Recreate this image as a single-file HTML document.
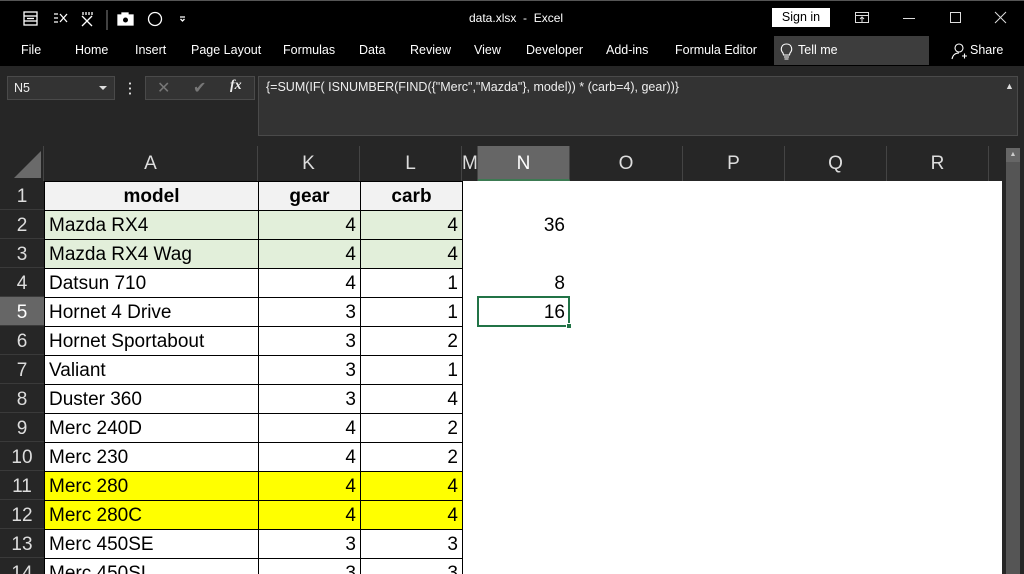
<!DOCTYPE html>
<html style="overflow:hidden;height:574px"><head><meta charset="utf-8"><style>
*{margin:0;padding:0;box-sizing:border-box}
html,body{width:1024px;height:574px;overflow:hidden}
body{background:#262626;font-family:"Segoe UI","Liberation Sans","DejaVu Sans",sans-serif;position:relative;color:#fff}
.abs{position:absolute}
.title{left:0;top:0;width:1024px;height:36px;background:#000;border-top:1px solid #555}
.tabs{left:0;top:36px;width:1024px;height:30px;background:#000}
.t{position:absolute;top:43px;font-size:12.5px;color:#fff}
.hdr{top:146px;height:35px;font-size:19px;color:#ddd;text-align:center;line-height:36px;border-right:1px solid #444}
.rh{position:absolute;left:0;width:44px;height:29px;background:#262626;color:#ddd;font-size:19px;text-align:center;line-height:31px;border-bottom:1px solid #3a3a3a}
.c{position:absolute;height:30px;border:1px solid #000;background:#fff;color:#000;font-size:19px;line-height:30px;padding:0 4px;white-space:nowrap;overflow:hidden}
.r{text-align:right}
</style></head><body>
<div class="abs title"></div>
<div class="abs tabs"></div>
<svg class="abs" style="left:20px;top:8px" width="180" height="22" viewBox="0 0 180 22" fill="none" stroke="#fff" stroke-width="1.3">
<rect x="4" y="4" width="13" height="13"/><line x1="4" y1="8" x2="17" y2="8"/><line x1="4" y1="13" x2="17" y2="13"/><line x1="7" y1="10.5" x2="14" y2="10.5"/>
<path d="M34 6h4M34 10h4M34 14h4M40 6l7 8M47 6l-7 8"/>
<path d="M63 4v3M66 4v3M69 4v3M72 4v3M62 8l10 10M72 8l-10 10"/>
<line x1="87" y1="2" x2="87" y2="22" stroke="#666"/>
<rect x="98" y="7" width="15" height="10" fill="#fff"/><rect x="102" y="5" width="6" height="3" fill="#fff"/><circle cx="105.5" cy="12" r="2.5" fill="#000" stroke="none"/>
<circle cx="135" cy="11" r="6.5"/>
<path d="M160 9h5M160.5 11l2 2 2-2" />
</svg>
<div class="abs" style="left:469px;top:11px;font-size:12px">data.xlsx &nbsp;-&nbsp; Excel</div>
<div class="abs" style="left:772px;top:8px;width:58px;height:19px;background:#fff;color:#000;font-size:12.5px;text-align:center;line-height:19px">Sign in</div>
<svg class="abs" style="left:850px;top:8px" width="170" height="20" fill="none" stroke="#ddd" stroke-width="1">
<rect x="5.5" y="4.5" width="13" height="10"/><line x1="5" y1="7.5" x2="19" y2="7.5"/><path d="M12 14V9M10 11l2-2 2 2"/>
<line x1="53" y1="10.5" x2="65" y2="10.5"/>
<rect x="100.5" y="4.5" width="10" height="10"/>
<path d="M145 4l11 11M156 4l-11 11"/>
</svg>
<div class="t" style="left:21px">File</div>
<div class="t" style="left:75px">Home</div>
<div class="t" style="left:135px">Insert</div>
<div class="t" style="left:191px">Page Layout</div>
<div class="t" style="left:283px">Formulas</div>
<div class="t" style="left:359px">Data</div>
<div class="t" style="left:410px">Review</div>
<div class="t" style="left:474px">View</div>
<div class="t" style="left:526px">Developer</div>
<div class="t" style="left:606px">Add-ins</div>
<div class="t" style="left:675px">Formula Editor</div>
<div class="abs" style="left:774px;top:36px;width:155px;height:29px;background:#3d3d3d"></div>
<svg class="abs" style="left:779px;top:41px" width="16" height="20" fill="none" stroke="#fff" stroke-width="1.1"><path d="M4 12C1 9 2 3 7.5 3S14 9 11 12L10.5 14H4.5Z"/><path d="M5 16h5M5.5 18h4"/></svg>
<div class="t" style="left:798px">Tell me</div>
<svg class="abs" style="left:950px;top:41px" width="18" height="20" fill="none" stroke="#fff" stroke-width="1.1"><circle cx="9" cy="7" r="4"/><path d="M2 18c1-5 4-6 7-6M12 15h5M14.5 12.5v5"/></svg>
<div class="t" style="left:970px">Share</div>
<div class="abs" style="left:7px;top:76px;width:108px;height:24px;background:#333;border:1px solid #4a4a4a;font-size:12.5px;line-height:22px;padding-left:6px;color:#eee">N5</div>
<div class="abs" style="left:99px;top:86px;border-left:4px solid transparent;border-right:4px solid transparent;border-top:4px solid #ddd"></div>
<div class="abs" style="left:129px;top:81px;width:2px;height:14px;background:radial-gradient(circle,#ddd 1px,transparent 1.2px) 0 0/2px 5px"></div>
<div class="abs" style="left:145px;top:76px;width:110px;height:24px;background:#333;border:1px solid #4a4a4a"></div>
<div class="abs" style="left:157px;top:78px;font-size:16px;color:#777">✕</div>
<div class="abs" style="left:193px;top:78px;font-size:16px;color:#777">✔</div>
<div class="abs" style="left:230px;top:78px;font-size:14px;font-style:italic;font-family:'Liberation Serif',serif;color:#eee;font-weight:bold">fx</div>
<div class="abs" style="left:258px;top:76px;width:760px;height:60px;background:#333;border:1px solid #4a4a4a;font-size:12.5px;padding:3px 7px;color:#eee">{=SUM(IF( ISNUMBER(FIND({"Merc","Mazda"}, model)) * (carb=4), gear))}</div>
<div class="abs" style="left:1005px;top:81px;font-size:9px;color:#ddd">▲</div>
<div class="abs" style="left:0;top:146px;width:44px;height:35px;border-right:1px solid #444"></div>
<div class="abs" style="left:14px;top:151px;width:0;height:0;border-left:27px solid transparent;border-bottom:27px solid #6a6a6a"></div>
<div class="abs hdr" style="left:44px;width:214px">A</div>
<div class="abs hdr" style="left:258px;width:102px">K</div>
<div class="abs hdr" style="left:360px;width:102px">L</div>
<div class="abs hdr" style="left:462px;width:16px;text-align:left">M</div>
<div class="abs hdr" style="left:478px;width:92px;background:#666;color:#fff;border-bottom:2px solid #3c7a52">N</div>
<div class="abs hdr" style="left:570px;width:113px">O</div>
<div class="abs hdr" style="left:683px;width:102px">P</div>
<div class="abs hdr" style="left:785px;width:102px">Q</div>
<div class="abs hdr" style="left:887px;width:102px">R</div>
<div class="abs" style="left:1006px;top:148px;width:14px;height:426px;background:#555"></div>
<div class="abs" style="left:1006px;top:148px;width:14px;height:14px;background:#666;color:#ccc;font-size:7px;text-align:center;line-height:14px">▲</div>
<div class="abs" style="left:0;top:181px;width:1024px;height:393px;overflow:hidden">
<div class="abs" style="left:44px;top:0;width:958px;height:393px;background:#fff"></div>
<div class="rh" style="top:0">1</div><div class="rh" style="top:29px">2</div><div class="rh" style="top:58px">3</div><div class="rh" style="top:87px">4</div><div class="rh" style="top:116px;background:#666;color:#fff">5</div><div class="rh" style="top:145px">6</div><div class="rh" style="top:174px">7</div><div class="rh" style="top:203px">8</div><div class="rh" style="top:232px">9</div><div class="rh" style="top:261px">10</div><div class="rh" style="top:290px">11</div><div class="rh" style="top:319px">12</div><div class="rh" style="top:348px">13</div><div class="rh" style="top:377px">14</div>
<div class="c" style="left:44px;top:0;width:215px;background:#f2f2f2;text-align:center;font-weight:bold">model</div>
<div class="c" style="left:258px;top:0;width:103px;background:#f2f2f2;text-align:center;font-weight:bold">gear</div>
<div class="c" style="left:360px;top:0;width:103px;background:#f2f2f2;text-align:center;font-weight:bold">carb</div>
<div class="c" style="left:44px;top:29px;width:215px;background:#e2efda">Mazda RX4</div><div class="c r" style="left:258px;top:29px;width:103px;background:#e2efda">4</div><div class="c r" style="left:360px;top:29px;width:103px;background:#e2efda">4</div>
<div class="c" style="left:44px;top:58px;width:215px;background:#e2efda">Mazda RX4 Wag</div><div class="c r" style="left:258px;top:58px;width:103px;background:#e2efda">4</div><div class="c r" style="left:360px;top:58px;width:103px;background:#e2efda">4</div>
<div class="c" style="left:44px;top:87px;width:215px">Datsun 710</div><div class="c r" style="left:258px;top:87px;width:103px">4</div><div class="c r" style="left:360px;top:87px;width:103px">1</div>
<div class="c" style="left:44px;top:116px;width:215px">Hornet 4 Drive</div><div class="c r" style="left:258px;top:116px;width:103px">3</div><div class="c r" style="left:360px;top:116px;width:103px">1</div>
<div class="c" style="left:44px;top:145px;width:215px">Hornet Sportabout</div><div class="c r" style="left:258px;top:145px;width:103px">3</div><div class="c r" style="left:360px;top:145px;width:103px">2</div>
<div class="c" style="left:44px;top:174px;width:215px">Valiant</div><div class="c r" style="left:258px;top:174px;width:103px">3</div><div class="c r" style="left:360px;top:174px;width:103px">1</div>
<div class="c" style="left:44px;top:203px;width:215px">Duster 360</div><div class="c r" style="left:258px;top:203px;width:103px">3</div><div class="c r" style="left:360px;top:203px;width:103px">4</div>
<div class="c" style="left:44px;top:232px;width:215px">Merc 240D</div><div class="c r" style="left:258px;top:232px;width:103px">4</div><div class="c r" style="left:360px;top:232px;width:103px">2</div>
<div class="c" style="left:44px;top:261px;width:215px">Merc 230</div><div class="c r" style="left:258px;top:261px;width:103px">4</div><div class="c r" style="left:360px;top:261px;width:103px">2</div>
<div class="c" style="left:44px;top:290px;width:215px;background:#ffff00">Merc 280</div><div class="c r" style="left:258px;top:290px;width:103px;background:#ffff00">4</div><div class="c r" style="left:360px;top:290px;width:103px;background:#ffff00">4</div>
<div class="c" style="left:44px;top:319px;width:215px;background:#ffff00">Merc 280C</div><div class="c r" style="left:258px;top:319px;width:103px;background:#ffff00">4</div><div class="c r" style="left:360px;top:319px;width:103px;background:#ffff00">4</div>
<div class="c" style="left:44px;top:348px;width:215px">Merc 450SE</div><div class="c r" style="left:258px;top:348px;width:103px">3</div><div class="c r" style="left:360px;top:348px;width:103px">3</div>
<div class="c" style="left:44px;top:377px;width:215px">Merc 450SL</div><div class="c r" style="left:258px;top:377px;width:103px">3</div><div class="c r" style="left:360px;top:377px;width:103px">3</div>
<div class="abs" style="left:478px;top:29px;width:92px;height:29px;color:#000;font-size:19px;text-align:right;padding-right:5px;line-height:31px">36</div>
<div class="abs" style="left:478px;top:87px;width:92px;height:29px;color:#000;font-size:19px;text-align:right;padding-right:5px;line-height:31px">8</div>
<div class="abs" style="left:477px;top:115px;width:93px;height:31px;border:2px solid #217346;color:#000;font-size:19px;text-align:right;padding-right:3px;line-height:29px">16</div>
<div class="abs" style="left:566px;top:142px;width:6px;height:6px;background:#217346;border:1px solid #fff"></div>
</div>
</body></html>
